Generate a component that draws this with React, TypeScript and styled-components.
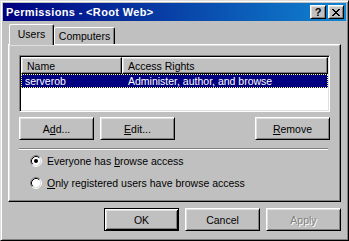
import React from 'react';
import styled, { createGlobalStyle } from 'styled-components';

const GlobalStyle = createGlobalStyle`
  html, body {
    margin: 0;
    padding: 0;
    background: #c0c0c0;
  }
  body {
    font-family: 'Liberation Sans', Arial, sans-serif;
    font-size: 10.5px;
    color: #000;
  }
`;

const Window = styled.div`
  box-sizing: border-box;
  width: 349px;
  height: 241px;
  background: #c0c0c0;
  border: 1px solid;
  border-color: #dfdfdf #000 #000 #dfdfdf;
  box-shadow: inset 1px 1px #fff, inset -1px -1px #808080;
  padding: 2px;
  display: flex;
  flex-direction: column;
`;

const TitleBar = styled.div`
  height: 18px;
  flex-shrink: 0;
  display: flex;
  align-items: center;
  padding: 0 2px 0 3px;
  background: linear-gradient(to right, #000080, #1084d0);
  color: #fff;
  font-weight: bold;
  font-size: 11px;
  letter-spacing: 0.35px;
`;

const TitleText = styled.div`
  flex: 1;
`;

const TitleButtons = styled.div`
  display: flex;
  gap: 2px;
`;

const TitleButton = styled.div`
  box-sizing: border-box;
  width: 16px;
  height: 14px;
  background: #c0c0c0;
  border: 1px solid;
  border-color: #fff #000 #000 #fff;
  box-shadow: inset 1px 1px #dfdfdf, inset -1px -1px #808080;
  display: flex;
  align-items: center;
  justify-content: center;
  color: #000;
  font-weight: bold;
  font-size: 11px;
  letter-spacing: 0;
  line-height: 1;
`;

const Body = styled.div`
  flex: 1;
  padding: 3px 5px 0 5px;
  display: flex;
  flex-direction: column;
`;

const TabStrip = styled.div`
  display: flex;
  align-items: flex-end;
  height: 20px;
  padding-left: 1px;
  position: relative;
  z-index: 1;
`;

const Tab = styled.div<{ $active?: boolean; $width: number }>`
  box-sizing: border-box;
  width: ${(p) => p.$width}px;
  height: ${(p) => (p.$active ? 21 : 17)}px;
  margin-bottom: ${(p) => (p.$active ? -1 : 0)}px;
  background: #c0c0c0;
  border-left: 1px solid #fff;
  border-top: 1px solid #fff;
  border-right: 1px solid #000;
  border-radius: 2px 2px 0 0;
  box-shadow: inset -1px 0 #808080;
  display: flex;
  justify-content: center;
  padding-top: ${(p) => (p.$active ? 3 : 2)}px;
`;

const Panel = styled.div`
  box-sizing: border-box;
  width: 333px;
  height: 158px;
  border: 1px solid;
  border-color: #fff #000 #000 #fff;
  box-shadow: inset -1px -1px #808080, inset 1px 1px #dfdfdf;
  padding: 10px;
  display: flex;
  flex-direction: column;
`;

const ListView = styled.div`
  box-sizing: border-box;
  height: 59px;
  background: #fff;
  border: 1px solid;
  border-color: #808080 #fff #fff #808080;
  box-shadow: inset 1px 1px #000, inset -1px -1px #dfdfdf;
  padding: 1px;
`;

const HeaderRow = styled.div`
  display: flex;
  height: 17px;
`;

const HeaderCell = styled.div<{ $width?: number }>`
  box-sizing: border-box;
  ${(p) => (p.$width ? `width: ${p.$width}px;` : 'flex: 1;')}
  background: #c0c0c0;
  border: 1px solid;
  border-color: #fff #000 #000 #fff;
  box-shadow: inset -1px -1px #808080, inset 1px 1px #dfdfdf;
  padding-left: 5px;
  display: flex;
  align-items: center;
`;

const Row = styled.div<{ $selected?: boolean }>`
  box-sizing: border-box;
  display: flex;
  height: 14px;
  align-items: center;
  background: ${(p) => (p.$selected ? '#000080' : 'transparent')};
  color: ${(p) => (p.$selected ? '#fff' : '#000')};
  border: 1px dotted ${(p) => (p.$selected ? '#ffff7f' : 'transparent')};
`;

const Cell = styled.div<{ $width?: number; $pad: number }>`
  ${(p) => (p.$width ? `width: ${p.$width}px;` : 'flex: 1;')}
  padding-left: ${(p) => p.$pad}px;
  box-sizing: border-box;
  white-space: nowrap;
`;

const ButtonRow = styled.div`
  display: flex;
  gap: 6px;
  margin-top: 5px;
`;

const Button = styled.button<{ $default?: boolean; $push?: boolean }>`
  box-sizing: border-box;
  width: 75px;
  height: 23px;
  padding: 0;
  margin: 0;
  ${(p) => (p.$push ? 'margin-left: auto;' : '')}
  background: #c0c0c0;
  font-family: inherit;
  font-size: 10.5px;
  color: #000;
  border: 1px solid;
  ${(p) =>
    p.$default
      ? `border-color: #000;
         box-shadow: inset 1px 1px #fff, inset -1px -1px #000, inset 2px 2px #dfdfdf, inset -2px -2px #808080;`
      : `border-color: #fff #000 #000 #fff;
         box-shadow: inset 1px 1px #dfdfdf, inset -1px -1px #808080;`}
  &:disabled {
    color: #808080;
    text-shadow: 1px 1px 0 #fff;
  }
`;

const Separator = styled.div`
  margin: 8px 2px 0 0;
  border-top: 1px solid #808080;
  border-bottom: 1px solid #fff;
`;

const RadioGroup = styled.div`
  display: flex;
  flex-direction: column;
  gap: 6px;
  margin-top: 3px;
`;

const RadioRow = styled.div`
  display: flex;
  align-items: center;
  gap: 5px;
  height: 16px;
  padding-left: 11px;
`;

const Footer = styled.div`
  display: flex;
  justify-content: flex-end;
  gap: 6px;
  margin-top: 6px;
`;

function Radio({ checked }: { checked?: boolean }) {
  return (
    <svg width="12" height="12" viewBox="0 0 12 12">
      <circle cx="6" cy="6" r="4.5" fill="#fff" />
      <path d="M2.11 9.89 A5.5 5.5 0 0 1 9.89 2.11" stroke="#808080" fill="none" />
      <path d="M9.89 2.11 A5.5 5.5 0 0 1 2.11 9.89" stroke="#fff" fill="none" />
      <path d="M2.82 9.18 A4.5 4.5 0 0 1 9.18 2.82" stroke="#000" fill="none" />
      <path d="M9.18 2.82 A4.5 4.5 0 0 1 2.82 9.18" stroke="#dfdfdf" fill="none" />
      {checked && <circle cx="6" cy="6" r="2" fill="#000" />}
    </svg>
  );
}

function CloseGlyph() {
  const rows = ['11....11', '.11..11.', '..1111..', '...11...', '..1111..', '.11..11.', '11....11'];
  return (
    <svg width="8" height="7" viewBox="0 0 8 7" shapeRendering="crispEdges">
      {rows.flatMap((r, y) =>
        r.split('').map((c, x) => (c === '1' ? <rect key={`${x}-${y}`} x={x} y={y} width="1" height="1" fill="#000" /> : null))
      )}
    </svg>
  );
}

export default function App() {
  return (
    <>
      <GlobalStyle />
      <Window>
        <TitleBar>
          <TitleText>Permissions - &lt;Root Web&gt;</TitleText>
          <TitleButtons>
            <TitleButton>?</TitleButton>
            <TitleButton>
              <CloseGlyph />
            </TitleButton>
          </TitleButtons>
        </TitleBar>
        <Body>
          <TabStrip>
            <Tab $active $width={45}>Users</Tab>
            <Tab $width={61}>Computers</Tab>
          </TabStrip>
          <Panel>
            <ListView>
              <HeaderRow>
                <HeaderCell $width={101}>Name</HeaderCell>
                <HeaderCell>Access Rights</HeaderCell>
              </HeaderRow>
              <Row $selected>
                <Cell $width={100} $pad={3}>serverob</Cell>
                <Cell $pad={6}>Administer, author, and browse</Cell>
              </Row>
            </ListView>
            <ButtonRow>
              <Button>A<u>d</u>d...</Button>
              <Button><u>E</u>dit...</Button>
              <Button $push><u>R</u>emove</Button>
            </ButtonRow>
            <Separator />
            <RadioGroup>
              <RadioRow>
                <Radio checked />
                <span>Everyone has <u>b</u>rowse access</span>
              </RadioRow>
              <RadioRow>
                <Radio />
                <span><u>O</u>nly registered users have browse access</span>
              </RadioRow>
            </RadioGroup>
          </Panel>
          <Footer>
            <Button $default>OK</Button>
            <Button>Cancel</Button>
            <Button disabled>Apply</Button>
          </Footer>
        </Body>
      </Window>
    </>
  );
}
